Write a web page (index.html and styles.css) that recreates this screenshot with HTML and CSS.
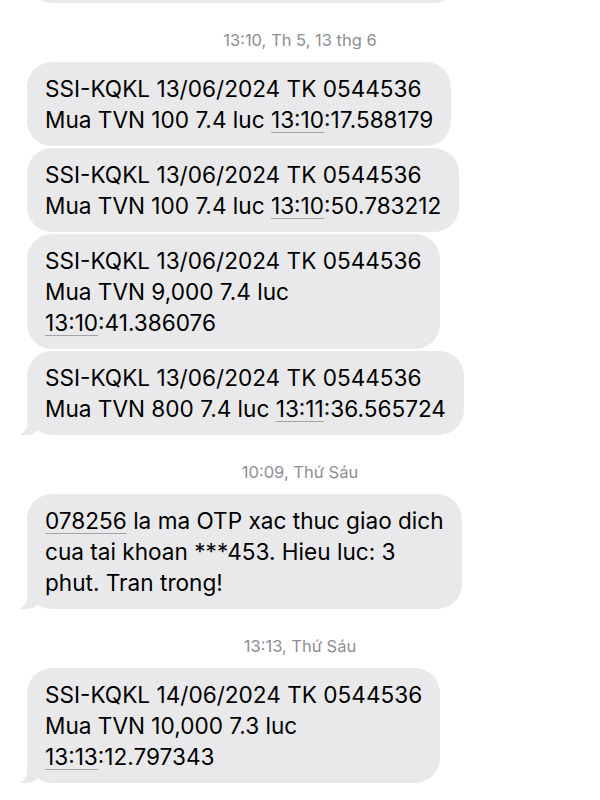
FILE: index.html
```html
<!DOCTYPE html>
<html>
<head>
<meta charset="utf-8">
<meta name="viewport" content="width=device-width, initial-scale=1">
<title>Tin nhắn</title>
<link rel="stylesheet" href="styles.css">
</head>
<body>
<main class="thread">

<div class="group">
  <div class="bubble bubble-cut"></div>
</div>

<div class="stamp">13:10, Th 5, 13 thg 6</div>

<div class="group">
  <p class="bubble">SSI-KQKL 13/06/2024 TK 0544536<br>Mua TVN 100 7.4 luc <span class="link">13:10</span>:17.588179</p>
  <p class="bubble">SSI-KQKL 13/06/2024 TK 0544536<br>Mua TVN 100 7.4 luc <span class="link">13:10</span>:50.783212</p>
  <p class="bubble">SSI-KQKL 13/06/2024 TK 0544536<br>Mua TVN 9,000 7.4 luc<br><span class="link">13:10</span>:41.386076</p>
  <p class="bubble tail">SSI-KQKL 13/06/2024 TK 0544536<br>Mua TVN 800 7.4 luc <span class="link">13:11</span>:36.565724</p>
</div>

<div class="stamp">10:09, Thứ Sáu</div>

<div class="group">
  <p class="bubble tail"><span class="link">078256</span> la ma OTP xac thuc giao dich<br>cua tai khoan ***453. Hieu luc: 3<br>phut. Tran trong!</p>
</div>

<div class="stamp">13:13, Thứ Sáu</div>

<div class="group">
  <p class="bubble tail">SSI-KQKL 14/06/2024 TK 0544536<br>Mua TVN 10,000 7.3 luc<br><span class="link">13:13</span>:12.797343</p>
</div>

</main>
</body>
</html>
```

FILE: styles.css
```css
* {box-sizing: border-box}

body {
 margin: 0;
 background: #fff;
 font-family: "Inter", "Liberation Sans", sans-serif;
 overflow: hidden;
}

.thread {
 display: flex;
 flex-direction: column;
}

.group {
 display: flex;
 flex-direction: column;
 align-items: flex-start;
 gap: 2px;
 padding-left: 27px;
}

.bubble {
 position: relative;
 margin: 0;
 padding: 11px 18px;
 background: #e9e9eb;
 color: #000;
 border-radius: 25px;
 font-size: 22.6px;
 line-height: 31px;
 white-space: nowrap;
}

/* only the bottom of the previous message shows */
.bubble-cut {
 width: 432px;
 height: 84px;
 margin-top: -81px;
}

.tail::before,
.tail::after {
 content: "";
 position: absolute;
 bottom: 0;
 height: 22px;
}

.tail::before {
 left: -7px;
 width: 22px;
 background: #e9e9eb;
 border-bottom-right-radius: 16px 14px;
}

.tail::after {
 left: -27px;
 width: 27px;
 background: #fff;
 border-bottom-right-radius: 11px;
}

.link {
 text-decoration: underline;
 text-decoration-color: #a3a3a8;
 text-decoration-thickness: 1px;
 text-underline-offset: 4px;
}

.stamp {
 margin: 27px 0 12px;
 text-align: center;
 font-size: 16.5px;
 line-height: 20px;
 color: #8e8e93;
}
```
